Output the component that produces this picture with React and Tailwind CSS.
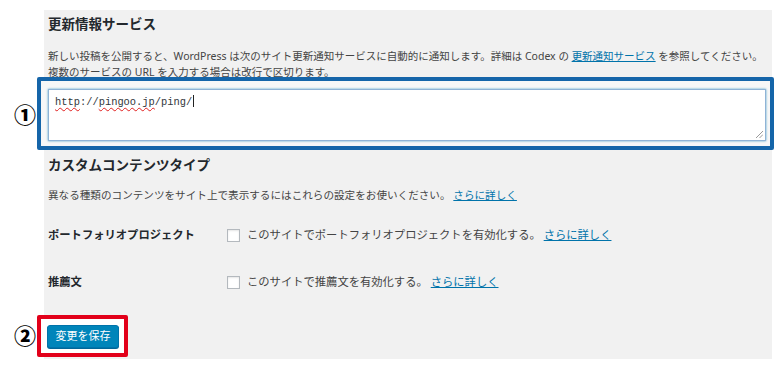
export default function App() {
  return (
    <main className="h-[371px] w-[780px] bg-white pl-[44px] pt-[10px] font-['Noto_Sans','Noto_Sans_CJK_JP',sans-serif] text-[#444]">
      <div className="h-[349px] w-[728px] bg-[#f1f1f1] pl-[4px] pt-[6px]">
        {/* Update services */}
        <h2 className="text-[13.5px] font-bold leading-[16px] text-[#23282d]">
          更新情報サービス
        </h2>
        <p className="mt-[16px] text-[10.5px] leading-[16px]">
          新しい投稿を公開すると、WordPress は次のサイト更新通知サービスに自動的に通知します。詳細は Codex の{" "}
          <a className="text-[#0073aa] underline">更新通知サービス</a> を参照してください。
          <br />
          複数のサービスの URL を入力する場合は改行で区切ります。
        </p>

        <div className="relative -ml-[11px] -mt-[3px] h-[73px] w-[737px] rounded-[2px] border-4 border-[#1565a9] bg-[#f7f7f7] pl-[7px] pt-[8px]">
          <span className="absolute -left-[27px] top-[20px] text-[22px] font-black leading-[26px] text-black">
            ①
          </span>
          <div className="relative h-[52px] w-[718px] border border-[#8fb3d6] bg-white pl-[6px] pt-[3px] font-['Liberation_Mono',monospace] text-[10.4px] leading-[16px] text-[#32373c] shadow-[0_0_2px_rgba(30,140,190,0.8)]">
            <span className="underline decoration-[#e02020] decoration-wavy decoration-1 underline-offset-2">http</span>
            ://
            <span className="underline decoration-[#e02020] decoration-wavy decoration-1 underline-offset-2">pingoo.jp</span>
            /ping/
            <span className="ml-px inline-block h-[12px] w-px translate-y-[2px] bg-[#222]" />
            <svg className="absolute bottom-[2px] right-[2px]" width="8" height="8" viewBox="0 0 8 8">
              <path d="M1 8 L8 1 M4.5 8 L8 4.5" stroke="#9a9a9a" strokeWidth="1" />
            </svg>
          </div>
        </div>

        {/* Custom content types */}
        <h2 className="mt-[7px] text-[13.5px] font-bold leading-[16px] text-[#23282d]">
          カスタムコンテンツタイプ
        </h2>
        <p className="mt-[14px] text-[10.6px] leading-[16px]">
          異なる種類のコンテンツをサイト上で表示するにはこれらの設定をお使いください。{" "}
          <a className="text-[#0073aa] underline">さらに詳しく</a>
        </p>

        <div className="mt-[24px] flex items-center">
          <div className="w-[179px] text-[11.3px] font-bold leading-[16px] text-[#23282d]">
            ポートフォリオプロジェクト
          </div>
          <span className="h-[13px] w-[13px] border border-[#b4b9be] bg-white shadow-[inset_0_1px_2px_rgba(0,0,0,0.1)]" />
          <span className="ml-[7px] text-[11.3px] leading-[16px]">
            このサイトでポートフォリオプロジェクトを有効化する。{" "}
            <a className="text-[#0073aa] underline">さらに詳しく</a>
          </span>
        </div>

        <div className="mt-[31px] flex items-center">
          <div className="w-[179px] text-[11.3px] font-bold leading-[16px] text-[#23282d]">
            推薦文
          </div>
          <span className="h-[13px] w-[13px] border border-[#b4b9be] bg-white shadow-[inset_0_1px_2px_rgba(0,0,0,0.1)]" />
          <span className="ml-[7px] text-[11.3px] leading-[16px]">
            このサイトで推薦文を有効化する。{" "}
            <a className="text-[#0073aa] underline">さらに詳しく</a>
          </span>
        </div>

        {/* Save */}
        <div className="relative -ml-[11px] mt-[25px] flex h-[42px] w-[91px] items-center rounded-[2px] border-4 border-[#e2001a] bg-white pl-[6px]">
          <span className="absolute -left-[27px] top-[3px] text-[22px] font-black leading-[26px] text-black">
            ②
          </span>
          <button className="h-[23px] w-[72px] rounded-[3px] border border-[#0073aa] bg-[#0085ba] text-[11px] leading-[20px] text-white shadow-[0_1px_0_#006799]">
            変更を保存
          </button>
        </div>
      </div>
    </main>
  );
}
